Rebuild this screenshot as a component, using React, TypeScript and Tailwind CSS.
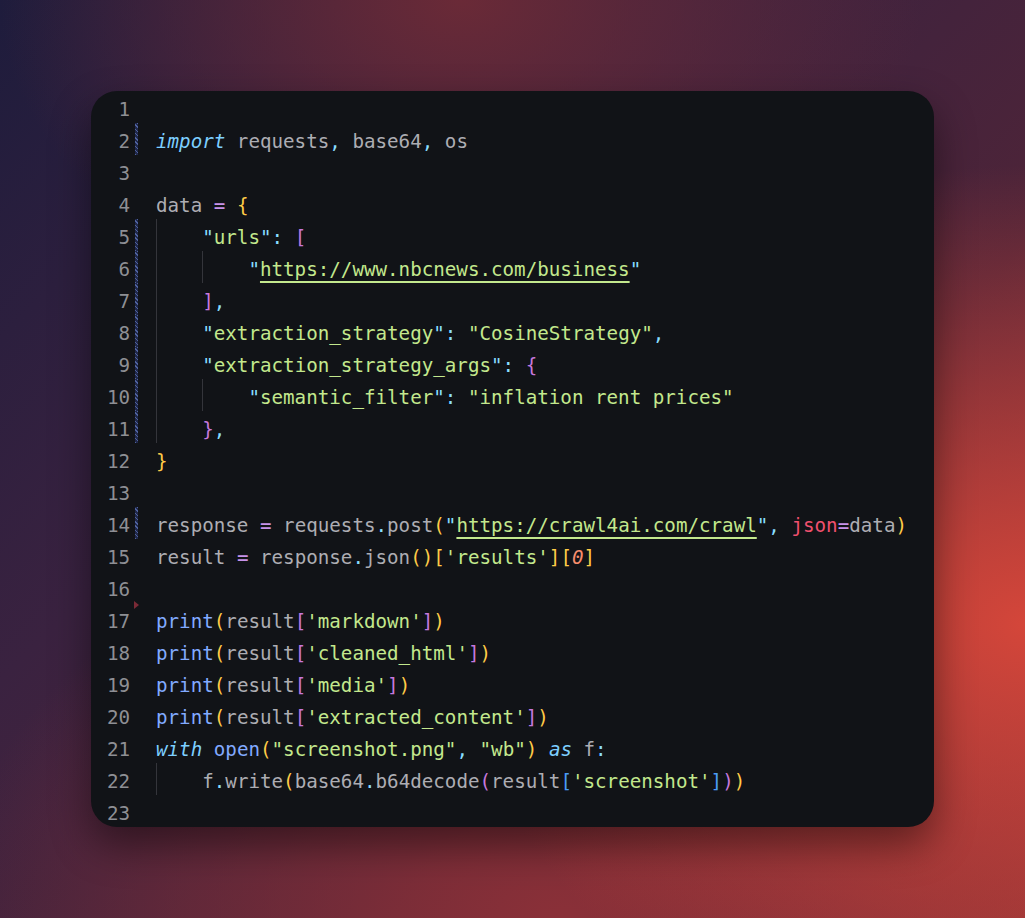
import React from "react";

type Tok = [string, string];
type Line = { indent?: number; toks: Tok[]; changed?: boolean; deleted?: boolean };

const id = "text-[#adadb3]";
const kw = "italic text-[#7dcfff]";
const str = "text-[#c3e88d]";
const q = "text-[#89ddff]";
const pn = "text-[#89ddff]";
const op = "text-[#c792ea]";
const yl = "text-[#ffcb47]";
const mg = "text-[#c678dd]";
const bl = "text-[#4b9cf5]";
const fn = "text-[#82aaff]";
const arg = "text-[#f0506e]";
const num = "italic text-[#f78c6c]";
const url = "text-[#c3e88d] underline decoration-2 underline-offset-[5px] decoration-[#c3e88d]";

const printLine = (key: string): Tok[] => [
  ["print", fn],
  ["(", yl],
  ["result", id],
  ["[", mg],
  [`'${key}'`, str],
  ["]", mg],
  [")", yl],
];

const lines: Line[] = [
  { toks: [] },
  {
    changed: true,
    toks: [
      ["import", kw],
      [" requests", id],
      [",", pn],
      [" base64", id],
      [",", pn],
      [" os", id],
    ],
  },
  { toks: [] },
  { toks: [["data ", id], ["=", op], [" ", id], ["{", yl]] },
  { changed: true, indent: 1, toks: [['"', q], ["urls", str], ['"', q], [":", pn], [" ", id], ["[", mg]] },
  { changed: true, indent: 2, toks: [['"', q], ["https://www.nbcnews.com/business", url], ['"', q]] },
  { changed: true, indent: 1, toks: [["]", mg], [",", pn]] },
  {
    changed: true,
    indent: 1,
    toks: [
      ['"', q],
      ["extraction_strategy", str],
      ['"', q],
      [":", pn],
      [" ", id],
      ['"CosineStrategy"', str],
      [",", pn],
    ],
  },
  {
    changed: true,
    indent: 1,
    toks: [['"', q], ["extraction_strategy_args", str], ['"', q], [":", pn], [" ", id], ["{", mg]],
  },
  {
    changed: true,
    indent: 2,
    toks: [
      ['"', q],
      ["semantic_filter", str],
      ['"', q],
      [":", pn],
      [" ", id],
      ['"inflation rent prices"', str],
    ],
  },
  { changed: true, indent: 1, toks: [["}", mg], [",", pn]] },
  { toks: [["}", yl]] },
  { toks: [] },
  {
    changed: true,
    toks: [
      ["response ", id],
      ["=", op],
      [" requests", id],
      [".", pn],
      ["post", id],
      ["(", yl],
      ['"', q],
      ["https://crawl4ai.com/crawl", url],
      ['"', q],
      [",", pn],
      [" ", id],
      ["json", arg],
      ["=", op],
      ["data", id],
      [")", yl],
    ],
  },
  {
    toks: [
      ["result ", id],
      ["=", op],
      [" response", id],
      [".", pn],
      ["json", id],
      ["()", yl],
      ["[", yl],
      ["'results'", str],
      ["]", yl],
      ["[", yl],
      ["0", num],
      ["]", yl],
    ],
  },
  { toks: [] },
  { deleted: true, toks: printLine("markdown") },
  { toks: printLine("cleaned_html") },
  { toks: printLine("media") },
  { toks: printLine("extracted_content") },
  {
    toks: [
      ["with", kw],
      [" ", id],
      ["open", fn],
      ["(", yl],
      ['"screenshot.png"', str],
      [",", pn],
      [" ", id],
      ['"wb"', str],
      [")", yl],
      [" ", id],
      ["as", kw],
      [" f", id],
      [":", pn],
    ],
  },
  {
    indent: 1,
    toks: [
      ["f", id],
      [".", pn],
      ["write", id],
      ["(", yl],
      ["base64", id],
      [".", pn],
      ["b64decode", id],
      ["(", mg],
      ["result", id],
      ["[", bl],
      ["'screenshot'", str],
      ["]", bl],
      [")", mg],
      [")", yl],
    ],
  },
  { toks: [] },
];

const CodeRow = ({ line, n }: { line: Line; n: number }) => (
  <div className="flex h-[32px] leading-[32px]">
    <div className="w-[39px] shrink-0 translate-y-[3px] text-right text-[#8e8f94]">{n}</div>
    <div className="relative w-[26px] shrink-0">
      {line.changed && (
        <span className="absolute inset-y-0 left-[5px] w-[3px] bg-[repeating-linear-gradient(45deg,#4f62a0_0px,#4f62a0_1px,#20284a_1px,#20284a_3px)]" />
      )}
      {line.deleted && (
        <span className="absolute -top-[2px] left-[4px] h-0 w-0 border-y-[4px] border-l-[5px] border-y-transparent border-l-[#7a2a36]" />
      )}
    </div>
    <div className="flex whitespace-pre">
      {Array.from({ length: line.indent ?? 0 }).map((_, i) => (
        <span key={i} className="inline-block h-full w-[4ch] border-l border-[#34353b]" />
      ))}
      <span className="translate-y-[3px]">
        {line.toks.map(([t, cls], i) => (
          <span key={i} className={cls}>
            {t}
          </span>
        ))}
      </span>
    </div>
  </div>
);

export default function App() {
  return (
    <div className="flex h-[918px] w-full items-center justify-center bg-[radial-gradient(ellipse_55%_50%_at_100%_68%,#d4463a_0%,rgba(212,70,58,0)_100%),radial-gradient(ellipse_45%_35%_at_45%_0%,#6a2a37_0%,rgba(106,42,55,0)_100%),radial-gradient(ellipse_60%_45%_at_55%_100%,#8a3038_0%,rgba(138,48,56,0)_100%),linear-gradient(135deg,#1e1c3c_0%,#3a2240_35%,#4e2438_65%,#8a3236_100%)]">
      <div className="w-[843px] overflow-hidden rounded-[26px] bg-[#111317] font-['DejaVu_Sans_Mono',monospace] text-[19.2px] shadow-[0_18px_40px_rgba(0,0,0,0.45)]">
        {lines.map((line, i) => (
          <CodeRow key={i} line={line} n={i + 1} />
        ))}
      </div>
    </div>
  );
}
